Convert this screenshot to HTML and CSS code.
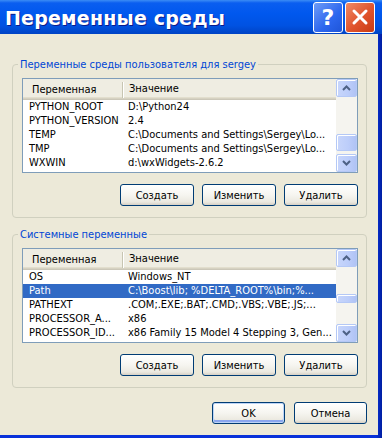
FILE: index.html
```html
<!DOCTYPE html>
<html lang="ru">
<head>
  <meta charset="UTF-8">
  <title>Переменные среды</title>
  <link rel="stylesheet" href="styles.css">
</head>
<body>
  <div class="window">
    <div class="titlebar">
      <span class="title">Переменные среды</span>
      <button class="cap help">?</button>
      <button class="cap close">
        <svg width="18" height="18" viewBox="0 0 18 18"><path d="M3 3 L15 15 M15 3 L3 15" stroke="#fff" stroke-width="3" stroke-linecap="round"/></svg>
      </button>
    </div>

    <div class="client">
      <fieldset class="group">
        <legend>Переменные среды пользователя для sergey</legend>
        <div class="listview">
          <div class="list-main">
            <div class="list-head"><span class="col-name">Переменная</span><span class="col-value">Значение</span></div>
            <div class="list-row"><span class="col-name">PYTHON_ROOT</span><span class="col-value">D:\Python24</span></div>
            <div class="list-row"><span class="col-name">PYTHON_VERSION</span><span class="col-value">2.4</span></div>
            <div class="list-row"><span class="col-name">TEMP</span><span class="col-value">C:\Documents and Settings\Sergey\Lo...</span></div>
            <div class="list-row"><span class="col-name">TMP</span><span class="col-value">C:\Documents and Settings\Sergey\Lo...</span></div>
            <div class="list-row"><span class="col-name">WXWIN</span><span class="col-value">d:\wxWidgets-2.6.2</span></div>
          </div>
          <div class="scrollbar">
            <div class="sb-btn"><svg width="9" height="6" viewBox="0 0 9 6"><path d="M1 5 L4.5 1.5 L8 5" fill="none" stroke="#4d6185" stroke-width="2"/></svg></div>
            <div class="sb-track">
              <div class="sb-thumb" style="margin-top: 37px; height: 17px;"></div>
            </div>
            <div class="sb-btn"><svg width="9" height="6" viewBox="0 0 9 6"><path d="M1 1 L4.5 4.5 L8 1" fill="none" stroke="#4d6185" stroke-width="2"/></svg></div>
          </div>
        </div>
        <div class="btn-row">
          <button class="btn">Создать</button>
          <button class="btn">Изменить</button>
          <button class="btn">Удалить</button>
        </div>
      </fieldset>

      <fieldset class="group">
        <legend>Системные переменные</legend>
        <div class="listview">
          <div class="list-main">
            <div class="list-head"><span class="col-name">Переменная</span><span class="col-value">Значение</span></div>
            <div class="list-row"><span class="col-name">OS</span><span class="col-value">Windows_NT</span></div>
            <div class="list-row selected"><span class="col-name">Path</span><span class="col-value">C:\Boost\lib; %DELTA_ROOT%\bin;%...</span></div>
            <div class="list-row"><span class="col-name">PATHEXT</span><span class="col-value">.COM;.EXE;.BAT;.CMD;.VBS;.VBE;.JS;...</span></div>
            <div class="list-row"><span class="col-name">PROCESSOR_A...</span><span class="col-value">x86</span></div>
            <div class="list-row"><span class="col-name">PROCESSOR_ID...</span><span class="col-value">x86 Family 15 Model 4 Stepping 3, Gen...</span></div>
          </div>
          <div class="scrollbar">
            <div class="sb-btn"><svg width="9" height="6" viewBox="0 0 9 6"><path d="M1 5 L4.5 1.5 L8 5" fill="none" stroke="#4d6185" stroke-width="2"/></svg></div>
            <div class="sb-track">
              <div class="sb-thumb" style="margin-top: 27px; height: 9px;"></div>
            </div>
            <div class="sb-btn"><svg width="9" height="6" viewBox="0 0 9 6"><path d="M1 1 L4.5 4.5 L8 1" fill="none" stroke="#4d6185" stroke-width="2"/></svg></div>
          </div>
        </div>
        <div class="btn-row">
          <button class="btn">Создать</button>
          <button class="btn">Изменить</button>
          <button class="btn">Удалить</button>
        </div>
      </fieldset>

      <div class="dialog-buttons">
        <button class="btn default">OK</button>
        <button class="btn">Отмена</button>
      </div>
    </div>
  </div>
</body>
</html>
```

FILE: styles.css
```css
body {
  margin: 0;
  background: #0831d9;
  font-family: "DejaVu Sans Condensed", "DejaVu Sans", sans-serif;
  font-stretch: condensed;
  font-size: 11px;
  color: #000;
}

.window {
  width: 382px;
  height: 438px;
  display: flex;
  flex-direction: column;
  background: linear-gradient(90deg, #0831d9 0, #0831d9 376px, #001ea0 382px);
}

/* title bar */
.titlebar {
  height: 34px;
  display: flex;
  align-items: center;
  gap: 2px;
  padding: 0 7px 0 5px;
  background: linear-gradient(#3b8cf5 0, #0a5ef0 3px, #0058ee 40%, #0052e2 75%, #0043c4 100%);
}

.title {
  flex: 1;
  padding-top: 1px;
  color: #fff;
  font-family: "DejaVu Sans", sans-serif;
  font-stretch: normal;
  font-weight: bold;
  font-size: 19px;
  letter-spacing: 0.2px;
  text-shadow: 1px 1px #0a1a8c;
}

.cap {
  width: 30px;
  height: 31px;
  border: 1px solid #fff;
  border-radius: 3px;
  padding: 0;
  display: flex;
  align-items: center;
  justify-content: center;
}

.help {
  background: linear-gradient(135deg, #6d9cf7, #2c66ee 60%, #1f55d8);
  color: #fff;
  font-family: "DejaVu Sans", sans-serif;
  font-weight: bold;
  font-size: 22px;
}

.close {
  background: linear-gradient(135deg, #ef8a66, #e0532c 55%, #c83b15);
}

/* client area */
.client {
  flex: 1;
  margin: 0 4px 3px 0;
  padding-top: 24px;
  background: #ece9d8;
  display: flex;
  flex-direction: column;
}

.group {
  margin: 0 11px 10px 12px;
  padding: 7px 8px 11px 9px;
  min-inline-size: 0;
  border: 1px solid #d0d0bf;
  border-radius: 4px;
}

.group legend {
  margin-left: -4px;
  padding: 0 2px;
  line-height: 13px;
  color: #0046d5;
}

/* list view */
.listview {
  height: 95px;
  box-sizing: border-box;
  border: 1px solid #7f9db9;
  background: #fff;
  display: flex;
}

.list-main {
  flex: 1;
  min-width: 0;
}

.list-head {
  display: grid;
  grid-template-columns: 100px 1fr;
  height: 21px;
  box-sizing: border-box;
  padding-top: 2px;
  line-height: 16px;
  background: #efede2;
  box-shadow: inset 0 -1px #cbc7b8, inset 0 -2px #d6d2c2, inset 0 -3px #e2decd;
}

.list-head .col-name {
  padding-left: 9px;
  border-right: 1px solid #c7c5b2;
  box-shadow: 1px 0 #fff;
  margin: 1px 0 4px;
}

.list-head .col-value {
  padding-left: 6px;
}

.list-row {
  display: grid;
  grid-template-columns: 100px 1fr;
  height: 14px;
  line-height: 14px;
  white-space: nowrap;
}

.list-row span {
  overflow: hidden;
}

.list-row .col-name {
  padding-left: 6px;
}

.list-row .col-value {
  padding-left: 5px;
}

.list-row.selected {
  background: #316ac5;
  color: #fff;
}

/* scroll bar */
.scrollbar {
  width: 21px;
  display: flex;
  flex-direction: column;
  background: #f5f4ef;
}

.sb-btn,
.sb-thumb {
  box-sizing: border-box;
  border: 1px solid #b4c8f6;
  border-radius: 2px;
  background: linear-gradient(90deg, #c8d6fb, #bccdfa 60%, #b0c3f5);
  box-shadow: inset 1px 1px #fff;
}

.sb-btn {
  height: 18px;
  display: flex;
  align-items: center;
  justify-content: center;
}

.sb-track {
  flex: 1;
}

/* buttons */
.btn-row,
.dialog-buttons {
  display: flex;
  justify-content: flex-end;
  gap: 8px;
}

.btn-row {
  margin-top: 11px;
}

.btn {
  width: 74px;
  height: 22px;
  padding: 0;
  border: 1px solid #003c74;
  border-radius: 3px;
  background: linear-gradient(#ffffff, #f6f5f0 50%, #ebe9e0 85%, #d6d0c5);
  font: inherit;
  color: #000;
}

.dialog-buttons {
  margin: 4px 11px 0 0;
  gap: 9px;
}

.dialog-buttons .btn {
  width: 73px;
}

.btn.default {
  box-shadow: inset 0 0 0 1px #bcd4f6, inset 0 -2px 0 1px #8aa6ee;
}
```
